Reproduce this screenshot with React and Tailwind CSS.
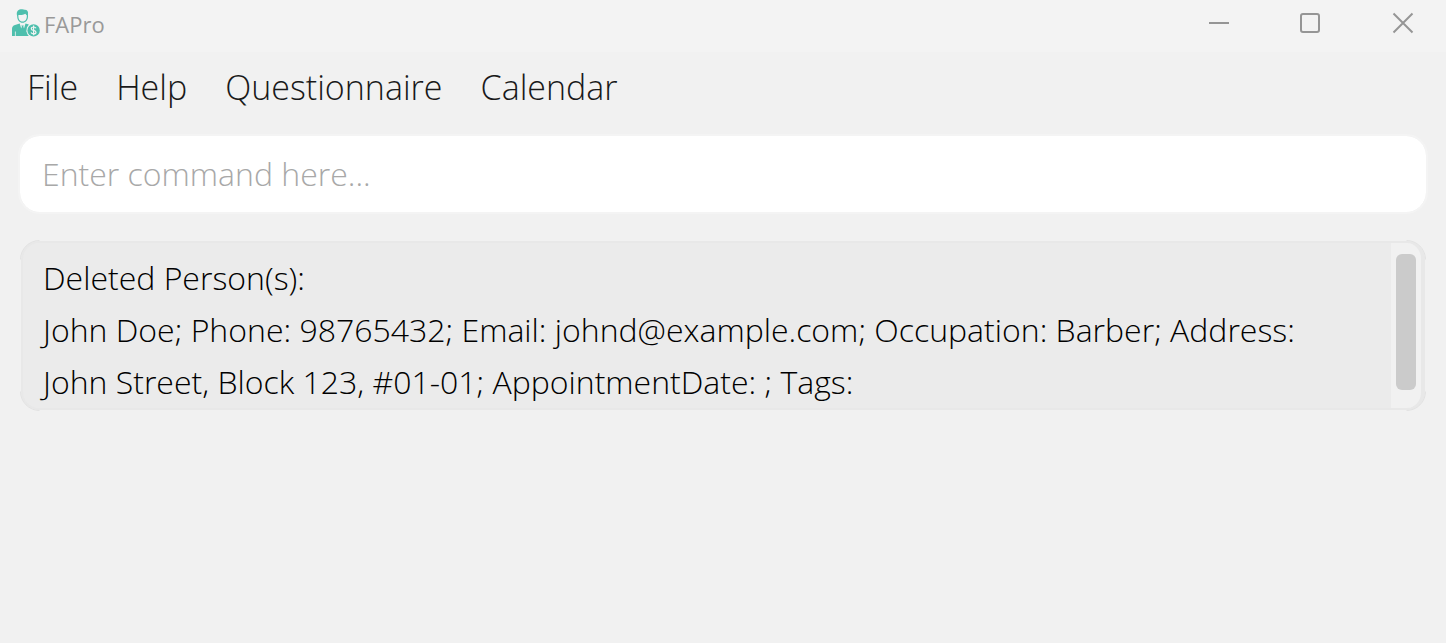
import React from "react";

const menus = ["File", "Help", "Questionnaire", "Calendar"];

const result =
  "Deleted Person(s):\nJohn Doe; Phone: 98765432; Email: johnd@example.com; Occupation: Barber; Address: John Street, Block 123, #01-01; AppointmentDate: ; Tags:";

const corners = [
  { key: "tl", place: "top-0 left-0" },
  { key: "tr", place: "top-0 right-0 rotate-90" },
  { key: "br", place: "right-0 bottom-0 rotate-180" },
  { key: "bl", place: "bottom-0 left-0 -rotate-90" },
];

function AppLogo() {
  return (
    <svg viewBox="0 0 28 28" className="size-7" aria-hidden="true">
      <path
        d="M4.8 5.2C4.6 2.2 6.6.3 9.6.3c1.400 0 2.200.5 3.200.4 2.400-.1 3.600 1.700 3.200 4.300v2.400c0 3.600-2.400 6.300-5.400 6.300S5.200 11 5.200 7.400z"
        fill="#4ebfad"
      />
      <path d="M6.400 6c2.600.3 5.200-.1 7-1.300.5.900.900 1.300 1.400 1.500v1.200c0 2.900-1.800 5.100-4.200 5.100S6.400 10.300 6.400 7.400z" fill="#f3f3f3" />
      <path
        d="M0 27v-7.200c0-2.100 1-3.300 3-3.900l4.700-1.500 1.500 5.200.7-2-.6-1.200h2.600l-.6 1.200.7 2 1.500-5.200 3.400 1.100-1.900 2.700-.7 4 1.300 3.300 1.200 1.500z"
        fill="#4ebfad"
      />
      <path d="M3.400 27v-4.500" stroke="#f3f3f3" strokeWidth="0.800" />
      <circle cx="21.600" cy="21.400" r="6.200" fill="#4ebfad" />
      <path
        d="M24 19.300c-.4-.9-1.300-1.300-2.400-1.300-1.300 0-2.300.6-2.300 1.700 0 2.400 4.700 1.100 4.700 3.500 0 1.100-1 1.700-2.400 1.700-1.200 0-2.200-.5-2.500-1.500M21.600 16.600v9.600"
        fill="none"
        stroke="#f3f3f3"
        strokeWidth="1.200"
      />
    </svg>
  );
}

function WindowButton({ label, children }) {
  return (
    <button type="button" aria-label={label} className="flex h-full w-[92px] items-center justify-center pl-1.5">
      <svg viewBox="0 0 22 22" className="size-[22px]" fill="none" stroke="#959595" strokeWidth="2" aria-hidden="true">
        {children}
      </svg>
    </button>
  );
}

export default function App() {
  return (
    <div className="min-h-screen bg-[#f1f1f1] font-['Open_Sans','Noto_Sans',sans-serif] text-black">
      <header className="flex h-[52px] items-center justify-between bg-[#f3f3f3] pb-1.5 pl-3">
        <div className="flex items-center gap-1">
          <AppLogo />
          <h1 className="pt-0.5 text-[22px] leading-8 text-[#999999]">FAPro</h1>
        </div>
        <div className="flex h-full">
          <WindowButton label="Minimize">
            <path d="M1 11h20" />
          </WindowButton>
          <WindowButton label="Maximize">
            <rect x="1" y="2" width="18" height="18" rx="2" />
          </WindowButton>
          <WindowButton label="Close">
            <path d="M1.500 1.500l19 19M20.500 1.500l-19 19" />
          </WindowButton>
        </div>
      </header>
      <nav aria-label="Main menu" className="flex h-[70px] items-center gap-[38px] px-[27px] text-[34px] font-light text-[#191919]">
        {menus.map((menu) => (
          <button key={menu} type="button">
            {menu}
          </button>
        ))}
      </nav>
      <main className="flex flex-col gap-7 px-5 pt-3.5">
        <input
          type="text"
          aria-label="Command"
          placeholder="Enter command here..."
          className="h-[76px] w-full rounded-[20px] bg-white px-[22px] pb-0.5 text-[32px] font-light outline-2 outline-[#f4f4f4] placeholder:text-[#a8a8a8]"
        />
        <section className="relative p-px">
          {corners.map(({ key, place }) => (
            <svg key={key} viewBox="0 0 20 20" className={`absolute size-5 ${place}`} fill="none" stroke="#e2e2e2" aria-hidden="true">
              <path d="M.5 19.500a19 19 0 0 1 19-19" />
            </svg>
          ))}
          <div className="flex h-[169px] overflow-hidden rounded-[18px] border-2 border-r-4 border-[#e8e8e8] bg-[#ebebeb]">
            <textarea
              readOnly
              aria-label="Result"
              rows={3}
              value={result}
              className="min-w-0 flex-1 resize-none overflow-hidden bg-transparent pt-[9px] pr-8 pl-5 text-[32px] leading-[52px] font-light outline-none"
            />
            <div className="w-[30px] bg-[#f1f1f1] px-[5px] pt-[11px]">
              <div className="h-[136px] rounded-md bg-[#cbcbcb]" />
            </div>
          </div>
        </section>
      </main>
    </div>
  );
}
